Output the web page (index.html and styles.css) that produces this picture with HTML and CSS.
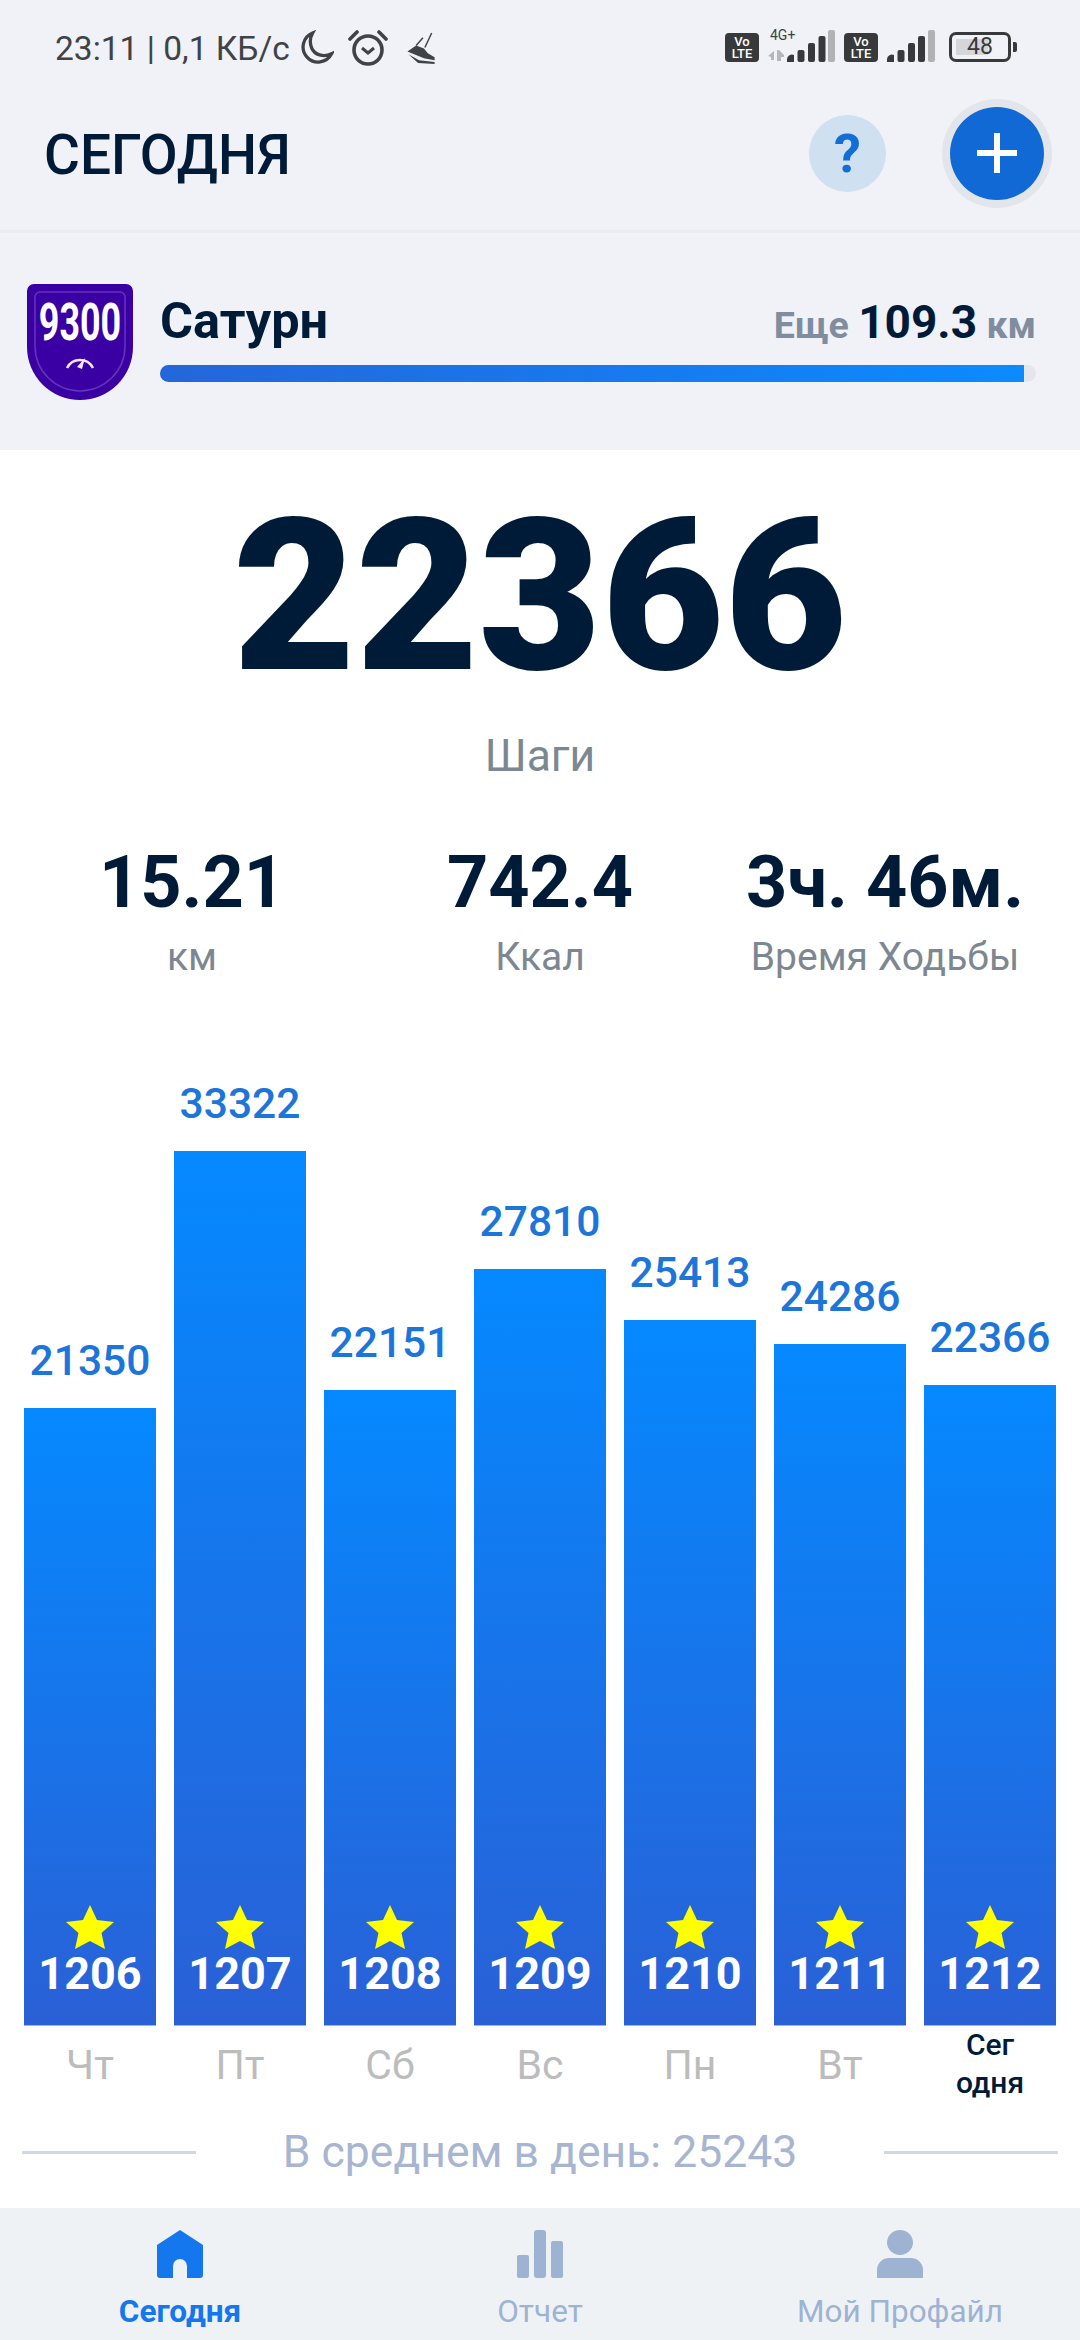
FILE: index.html
```html
<!DOCTYPE html>
<html lang="ru">
<head>
    <meta charset="UTF-8">
    <meta name="viewport" content="width=device-width, initial-scale=1.0">
    <title>Сегодня</title>
    <link rel="stylesheet" href="styles.css">
</head>
<body>
    <div class="app">
        <div class="status-bar">
            <div class="status-left">
                <span>23:11 | 0,1 КБ/с</span>
                <svg class="st-moon" viewBox="0 0 36 36"><path d="M14 2.5 A15.5 15.5 0 1 0 33.5 24 C25 28 16 25 13 18 C11 13 11.5 7 14 2.5Z" fill="none" stroke="#404346" stroke-width="3.4"/></svg>
                <svg class="st-alarm" viewBox="0 0 40 38"><circle cx="20" cy="21" r="14" fill="none" stroke="#404346" stroke-width="3.6"/><path d="M14 19l6 5 6-5" fill="none" stroke="#404346" stroke-width="3"/><path d="M2 10l7-7M38 10l-7-7" stroke="#404346" stroke-width="3.6" stroke-linecap="round"/></svg>
                <svg class="st-shoe" viewBox="0 0 30 34"><path d="M26 1l-7 15M17 6l-7 8" stroke="#404346" stroke-width="1.5" fill="none"/><path d="M10 14l8 3 4 5 7 4v3l-11-2L1 20z" fill="#404346"/><path d="M2 23l11 6 16 2v2l-17-1z" fill="#404346"/></svg>
            </div>
            <div class="status-right">
                <span class="volte">Vo<br>LTE</span>
                <div class="net">
                    <span class="net-label">4G+</span>
                    <svg class="signal-a" viewBox="0 0 67 32"><path d="M0 26l6-5v9H3v-3zM9 20h2l5 5v2h-3v4H9z" fill="#b5b7ba"/><g fill="#38393b"><path d="M19 32v-3a5 5 0 0 1 7-4v7z"/><rect x="29.5" y="20" width="7" height="12" rx="2"/><rect x="40" y="13" width="7" height="19" rx="2"/><rect x="50.5" y="6" width="7" height="26" rx="2"/></g><rect x="60" y="0" width="7" height="32" rx="2" fill="#b0b2b5"/></svg>
                </div>
                <span class="volte">Vo<br>LTE</span>
                <svg class="signal-b" viewBox="0 0 48 32"><g fill="#38393b"><path d="M0 32v-3a5 5 0 0 1 7-4v7z"/><rect x="10.5" y="20" width="7" height="12" rx="2"/><rect x="21" y="13" width="7" height="19" rx="2"/><rect x="31" y="6" width="7" height="26" rx="2"/></g><rect x="41" y="0" width="7" height="32" rx="2" fill="#b0b2b5"/></svg>
                <div class="battery">
                    <div class="battery-body"><span class="battery-fill"></span><span class="battery-num">48</span></div>
                    <span class="battery-cap"></span>
                </div>
            </div>
        </div>

        <div class="header">
            <h1>СЕГОДНЯ</h1>
            <div class="btn-help">?</div>
            <div class="btn-add"><span class="plus-h"></span><span class="plus-v"></span></div>
        </div>

        <div class="level">
            <div class="badge">
                <svg viewBox="0 0 106 116">
                    <path d="M7 0H99a7 7 0 0 1 7 7V63a53 53 0 0 1-106 0V7a7 7 0 0 1 7-7Z" fill="#3b00a3"/>
                    <path d="M13 8H93a5 5 0 0 1 5 5V62a45 45 0 0 1-90 0V13a5 5 0 0 1 5-5Z" fill="none" stroke="#6434bc" stroke-width="1.5"/>
                    <path d="M40 84a14.5 14.5 0 0 1 26 0" fill="none" stroke="#f1e8ff" stroke-width="2.5"/>
                    <path d="M50 83l8-9-3 11z" fill="#f1e8ff"/>
                </svg>
                <span class="badge-num">9300</span>
            </div>
            <div class="level-info">
                <div class="level-top">
                    <span class="level-name">Сатурн</span>
                    <span class="level-left">Еще <b>109.3</b> км</span>
                </div>
                <div class="progress"><div class="progress-fill"></div></div>
            </div>
        </div>

        <div class="main">
            <div class="steps">22366</div>
            <div class="steps-label">Шаги</div>

            <div class="stats">
                <div class="stat stat-km"><div class="stat-val">15.21</div><div class="stat-label">км</div></div>
                <div class="stat stat-kcal"><div class="stat-val">742.4</div><div class="stat-label">Ккал</div></div>
                <div class="stat stat-time"><div class="stat-val">3ч. 46м.</div><div class="stat-label">Время Ходьбы</div></div>
            </div>

            <div class="chart" id="chart"></div>

            <div class="average">
                <span class="avg-line"></span>
                <span class="avg-text">В среднем в день: 25243</span>
                <span class="avg-line"></span>
            </div>
        </div>

        <div class="tabbar">
            <div class="tab active">
                <svg viewBox="0 0 46 48"><path d="M23 0l23 15v30a3 3 0 0 1-3 3H30V36a7 7 0 0 0-14 0v12H3a3 3 0 0 1-3-3V15z" fill="#1577ee"/></svg>
                <span>Сегодня</span>
            </div>
            <div class="tab">
                <svg viewBox="0 0 46 48"><rect x="0" y="25" width="12" height="23" rx="2" fill="#9eb2d2"/><rect x="17" y="0" width="12" height="48" rx="3" fill="#9eb2d2"/><rect x="34" y="11" width="12" height="37" rx="2" fill="#9eb2d2"/></svg>
                <span>Отчет</span>
            </div>
            <div class="tab">
                <svg viewBox="0 0 46 48"><ellipse cx="23" cy="12.5" rx="13" ry="12.5" fill="#9eb2d2"/><path d="M12 28h22a12 12 0 0 1 12 11v9H0v-9a12 12 0 0 1 12-11z" fill="#9eb2d2"/></svg>
                <span>Мой Профайл</span>
            </div>
        </div>
    </div>

    <script>
        // Bars of the last seven days
        const days = [
            { steps: 21350, height: 618, id: 1206, label: 'Чт' },
            { steps: 33322, height: 875, id: 1207, label: 'Пт' },
            { steps: 22151, height: 636, id: 1208, label: 'Сб' },
            { steps: 27810, height: 757, id: 1209, label: 'Вс' },
            { steps: 25413, height: 706, id: 1210, label: 'Пн' },
            { steps: 24286, height: 682, id: 1211, label: 'Вт' },
            { steps: 22366, height: 641, id: 1212, label: 'Сег одня', today: true }
        ];
        const star = '<svg class="star" viewBox="0 0 48 44"><path d="M24 0l7 15 17 2-12.5 11 3.5 16-15-8-15 8 3.5-16L0 17l17-2z" fill="#ffff00"/></svg>';
        document.getElementById('chart').innerHTML = days.map(function(d) {
            return '<div class="day' + (d.today ? ' today' : '') + '">' +
                '<div class="bar-wrap">' +
                '<div class="bar-steps">' + d.steps + '</div>' +
                '<div class="bar" style="height:' + d.height + 'px">' + star +
                '<div class="bar-id">' + d.id + '</div></div>' +
                '</div>' +
                '<div class="day-label">' + d.label + '</div>' +
                '</div>';
        }).join('');
    </script>
</body>
</html>
```

FILE: styles.css
```css
* {
    box-sizing: border-box;
}
html, body {
    margin: 0;
    padding: 0;
}
body {
    width: 1080px;
    height: 2340px;
    overflow: hidden;
    font-family: Roboto, "Liberation Sans", sans-serif;
    background-color: #f0f2f7;
}
.app {
    display: flex;
    flex-direction: column;
    height: 2340px;
}

/* status bar */
.status-bar {
    height: 90px;
    padding: 30px 63px 0 55px;
    display: flex;
    justify-content: space-between;
    align-items: flex-start;
    color: #404346;
    flex-shrink: 0;
}
.status-left {
    display: flex;
    align-items: center;
    font-size: 33.5px;
    height: 36px;
}
.st-moon {
    width: 35px;
    height: 36px;
    margin-left: 9px;
}
.st-alarm {
    width: 40px;
    height: 38px;
    margin-left: 14px;
}
.st-shoe {
    width: 30px;
    height: 33px;
    margin-left: 18px;
}
.status-right {
    display: flex;
    align-items: flex-end;
    height: 32px;
}
.volte {
    width: 34px;
    height: 29px;
    background-color: #38393b;
    color: #fff;
    border-radius: 4px;
    font-size: 13px;
    line-height: 12px;
    font-weight: 500;
    text-align: center;
    padding-top: 3px;
}
.net {
    position: relative;
    width: 67px;
    height: 32px;
    margin: 0 9px;
}
.net-label {
    position: absolute;
    left: 2px;
    top: -2px;
    font-size: 14px;
    line-height: 14px;
}
.signal-a {
    position: absolute;
    left: 0;
    bottom: 0;
    width: 67px;
    height: 32px;
}
.signal-b {
    width: 48px;
    height: 32px;
    margin-left: 9px;
}
.battery {
    display: flex;
    align-items: center;
    margin-left: 14px;
}
.battery-body {
    position: relative;
    width: 62px;
    height: 30px;
    border: 3px solid #38393b;
    border-radius: 7px;
}
.battery-fill {
    position: absolute;
    left: 4px;
    top: 4px;
    bottom: 4px;
    width: 32px;
    background-color: #d5d6d9;
}
.battery-num {
    position: absolute;
    left: 0;
    right: 0;
    top: 0;
    text-align: center;
    font-size: 23px;
    line-height: 24px;
    color: #38393b;
}
.battery-cap {
    width: 4px;
    height: 10px;
    margin-left: 2px;
    background-color: #38393b;
    border-radius: 0 2px 2px 0;
}

/* header */
.header {
    height: 143px;
    display: flex;
    align-items: center;
    padding: 0 28px 14px 44px;
    border-bottom: 3px solid #e9ebef;
    flex-shrink: 0;
}
.header h1 {
    margin: 0;
    flex: 1;
    font-size: 55px;
    font-weight: 500;
    color: #001b38;
    position: relative;
    top: 2px;
}
.btn-help {
    width: 77px;
    height: 77px;
    border-radius: 50%;
    background-color: #cfe0f1;
    color: #136dd6;
    font-size: 54px;
    font-weight: 700;
    line-height: 77px;
    text-align: center;
    margin-right: 56px;
}
.btn-add {
    position: relative;
    width: 110px;
    height: 109px;
    border-radius: 50%;
    background-color: #1069d5;
    border: 8px solid #e2e5e9;
}
.plus-h, .plus-v {
    position: absolute;
    background-color: #fff;
    left: 50%;
    top: 50%;
    transform: translate(-50%, -50%);
}
.plus-h {
    width: 40px;
    height: 6px;
}
.plus-v {
    width: 6px;
    height: 40px;
}

/* level */
.level {
    height: 217px;
    display: flex;
    padding: 51px 44px 0 27px;
    flex-shrink: 0;
}
.badge {
    position: relative;
    width: 106px;
    height: 116px;
    flex-shrink: 0;
}
.badge svg {
    width: 106px;
    height: 116px;
    display: block;
}
.badge-num {
    position: absolute;
    top: 14px;
    left: -15px;
    right: -15px;
    text-align: center;
    font-size: 52px;
    line-height: 50px;
    font-weight: 700;
    color: #fff;
    transform: scaleX(0.69);
}
.level-info {
    flex: 1;
    margin-left: 27px;
    padding-top: 8px;
}
.level-top {
    display: flex;
    justify-content: space-between;
    align-items: baseline;
    height: 73px;
}
.level-name {
    font-size: 50.5px;
    line-height: 58px;
    font-weight: 700;
    color: #001b38;
}
.level-left {
    font-size: 37.5px;
    font-weight: 700;
    color: #7f8d9f;
}
.level-left b {
    font-size: 46px;
    font-weight: 700;
    color: #001b38;
}
.progress {
    height: 17px;
    border-radius: 9px;
    background-color: #e4e6ea;
}
.progress-fill {
    width: 98.6%;
    height: 17px;
    border-radius: 9px 0 0 9px;
    background: linear-gradient(to right, #2466da, #0b8bff);
}

/* white panel */
.main {
    flex: 1;
    background-color: #fff;
    display: flex;
    flex-direction: column;
    min-height: 0;
}
.steps {
    margin-top: 27px;
    font-size: 212px;
    line-height: 240px;
    font-weight: 900;
    color: #001b38;
    text-align: center;
}
.steps-label {
    font-size: 44.5px;
    line-height: 50px;
    color: #7d8791;
    text-align: center;
    margin-top: 14px;
}
.stats {
    display: flex;
    margin-top: 64px;
    height: 135px;
    flex-shrink: 0;
}
.stat {
    text-align: center;
    flex-shrink: 0;
}
.stat-km {
    width: 384px;
}
.stat-kcal {
    width: 312px;
}
.stat-time {
    width: 378px;
}
.stat-val {
    font-size: 72px;
    line-height: 76px;
    font-weight: 700;
    color: #001b38;
    margin-bottom: 13px;
    white-space: nowrap;
}
.stat-label {
    font-size: 39px;
    line-height: 46px;
    color: #7d8791;
}

/* chart */
.chart {
    display: flex;
    gap: 18px;
    padding: 0 24px;
    height: 1136px;
    flex-shrink: 0;
}
.day {
    width: 132px;
    display: flex;
    flex-direction: column;
}
.bar-wrap {
    height: 1046px;
    display: flex;
    flex-direction: column;
    justify-content: flex-end;
    align-items: center;
    flex-shrink: 0;
}
.bar-steps {
    font-size: 42.5px;
    line-height: 48px;
    font-weight: 500;
    color: #1c75d8;
    margin-bottom: 23px;
    white-space: nowrap;
}
.bar {
    width: 132px;
    display: flex;
    flex-direction: column;
    justify-content: flex-end;
    align-items: center;
    padding-bottom: 29px;
    background: linear-gradient(to bottom, #0589ff, #2a60d6);
    border-bottom: 1px solid #9bb5ea;
}
.star {
    width: 48px;
    height: 44px;
    margin-bottom: 3px;
}
.bar-id {
    font-size: 45px;
    line-height: 44px;
    font-weight: 700;
    color: #fff;
}
.day-label {
    font-size: 41px;
    line-height: 44px;
    color: #bcbcbc;
    text-align: center;
    margin-top: 17px;
}
.today .day-label {
    font-size: 30px;
    line-height: 38px;
    font-weight: 500;
    color: #001b38;
    margin-top: 0;
    padding: 0 24px;
}

/* average */
.average {
    display: flex;
    align-items: center;
    padding: 0 22px;
    height: 72px;
    flex-shrink: 0;
}
.avg-line {
    flex: 1;
    height: 3px;
    background-color: #cfd9e6;
}
.avg-text {
    width: 688px;
    text-align: center;
    font-size: 44.5px;
    color: #a8b5d0;
}

/* bottom tabs */
.tabbar {
    height: 132px;
    flex-shrink: 0;
    display: flex;
    background-color: #eff2f5;
    padding-top: 22px;
}
.tab {
    width: 360px;
    display: flex;
    flex-direction: column;
    align-items: center;
    color: #9eb2d2;
    font-size: 31.5px;
}
.tab svg {
    width: 46px;
    height: 48px;
    margin-bottom: 16px;
}
.tab span {
    line-height: 36px;
}
.tab.active {
    color: #1577ee;
    font-weight: 700;
}
```
